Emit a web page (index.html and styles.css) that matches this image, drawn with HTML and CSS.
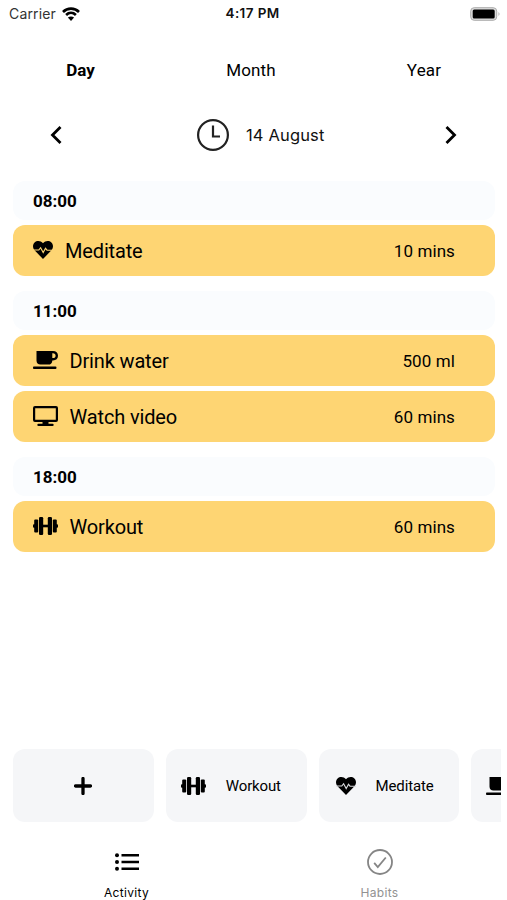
FILE: index.html
```html
<!DOCTYPE html>
<html lang="en">
<head>
<meta charset="utf-8">
<title>Activity</title>
<link rel="stylesheet" href="styles.css">
</head>
<body>
<svg class="defs" width="0" height="0" aria-hidden="true">
  <symbol id="heart" viewBox="0 0 20 18">
    <path d="M10 18 1.8 9.6C-.6 7 -.5 3.4 1.6 1.5 4-.7 7.700-.4 10 2.200 12.300-.4 16-.7 18.400 1.500 20.500 3.400 20.600 7 18.200 9.600Z"/>
    <path class="pulse" d="M0 9H5.800L7.600 6.700 10.200 11.500 12.500 7.300 14 9.200H20"/>
  </symbol>
  <symbol id="cup" viewBox="0 0 25 18">
    <path fill-rule="evenodd" d="M3.500 0H20C23 0 25 1.800 25 4.700S23 9.400 20 9.400H19.300C19.300 12 17.800 13.600 15.300 13.600H7.500C5 13.600 3.500 12 3.500 9.500ZM19.300 2.300V7.100H20C21.600 7.100 22.600 6.200 22.600 4.700S21.600 2.300 20 2.300ZM.8 15.500H22.500Q23.500 15.500 23.500 16.700T22.500 17.900H.8Q0 17.900 0 16.700T.8 15.500Z"/>
  </symbol>
  <symbol id="screen" viewBox="0 0 25 20">
    <path fill-rule="evenodd" d="M2 0H23Q25 0 25 2V14Q25 16 23 16H2Q0 16 0 14V2Q0 0 2 0ZM2.200 2.200V13.800H22.800V2.200ZM9.500 16h6v1.800h4q1.200 0 1.200 1.100t-1.200 1.100h-14q-1.200 0-1.200-1.100t1.200-1.100H9.500Z"/>
  </symbol>
  <symbol id="dumbbell" viewBox="0 0 25 18">
    <rect x="6" y="0" width="4.200" height="18" rx="1.200"/><rect x="14.800" y="0" width="4.200" height="18" rx="1.200"/>
    <rect x="1.200" y="2.600" width="4" height="12.800" rx="1"/><rect x="19.800" y="2.600" width="4" height="12.800" rx="1"/>
    <rect x="0" y="7.300" width="3" height="3.400" rx="1"/><rect x="22" y="7.300" width="3" height="3.400" rx="1"/>
    <rect x="9" y="7.700" width="7" height="2.600"/>
  </symbol>
</svg>
<header class="status">
  <span class="carrier">Carrier</span>
  <svg class="wifi" viewBox="0 0 18 14"><g fill="none" stroke="#000" stroke-width="2.600"><path d="M1 5C5.400.5 12.600.5 17 5"/><path d="M4.100 8C7 5.200 11 5.200 13.900 8"/></g><path d="M9 14 5.900 10.600Q9 8.200 12.100 10.600Z"/></svg>
  <span class="time">4:17 PM</span>
  <svg class="battery" viewBox="0 0 30 14"><rect x=".7" y=".7" width="26" height="12.600" rx="3.500" fill="#ddd" stroke="#aaa" stroke-width="1"/><rect x="2.700" y="2.500" width="22" height="9" rx="1.500"/><path d="M28.500 5Q30.500 7 28.500 9Z" fill="#aaa"/></svg>
</header>
<nav class="tabs"><span class="tab selected">Day</span><span class="tab month">Month</span><span class="tab year">Year</span></nav>
<section class="date">
  <svg class="prev" viewBox="0 0 12 18"><path d="M10.500 1 2.500 9l8 8"/></svg>
  <svg class="clock" viewBox="0 0 32 32"><circle cx="16" cy="16" r="14.900"/><path d="M16 6.500V17.500H23"/></svg>
  <span class="today">14 August</span>
  <svg class="next" viewBox="0 0 12 18"><path d="M1.500 1l8 8-8 8"/></svg>
</section>
<main class="schedule">
  <section class="slot"><h2>08:00</h2>
    <div class="row"><svg class="heart"><use href="#heart"/></svg><span class="name">Meditate</span><span class="amount">10 mins</span></div>
  </section>
  <section class="slot"><h2>11:00</h2>
    <div class="row"><svg class="cup"><use href="#cup"/></svg><span class="name">Drink water</span><span class="amount">500 ml</span></div>
    <div class="row"><svg class="screen"><use href="#screen"/></svg><span class="name">Watch video</span><span class="amount">60 mins</span></div>
  </section>
  <section class="slot"><h2>18:00</h2>
    <div class="row"><svg class="dumbbell"><use href="#dumbbell"/></svg><span class="name">Workout</span><span class="amount">60 mins</span></div>
  </section>
</main>
<section class="shortcuts">
  <div class="card add"><svg class="plus" viewBox="0 0 18 18"><path d="M9 1.500v15M1.500 9h15"/></svg></div>
  <div class="card"><svg class="dumbbell"><use href="#dumbbell"/></svg><span>Workout</span></div>
  <div class="card meditate"><svg class="heart"><use href="#heart"/></svg><span>Meditate</span></div>
  <div class="card"><svg class="cup"><use href="#cup"/></svg></div>
</section>
<footer class="bottom">
  <div class="item"><svg class="list" viewBox="0 0 26 26"><circle cx="3" cy="6.200" r="2"/><circle cx="3" cy="13" r="2"/><circle cx="3" cy="19.800" r="2"/><path d="M7.500 6.200H25M7.500 13H25M7.500 19.800H25"/></svg><span>Activity</span></div>
  <div class="item muted"><svg class="check" viewBox="0 0 26 26"><circle cx="13" cy="13" r="12"/><path d="m7.200 13.800 3.600 4.200 8-9.500"/></svg><span>Habits</span></div>
</footer>
</body>
</html>
```

FILE: styles.css
```css
* { box-sizing: border-box; }
body { margin: 0; width: 507px; height: 900px; overflow: hidden; background: #fff; color: #000; font-family: Roboto, sans-serif; display: flex; flex-direction: column; }
svg { display: block; flex: none; }
.defs { position: absolute; }
.status { height: 27px; display: grid; grid-template-columns: 53px 172px 1fr 37px; align-items: center; padding-left: 9px; font: 14px/27px Inter, sans-serif; }
.carrier { color: #333; letter-spacing: .15px; }
.wifi { width: 18px; height: 14px; }
.status .time { margin-left: -8.500px; font-weight: 600; color: #111; font-size: 13.500px; letter-spacing: .4px; }
.battery { width: 30px; height: 14px; }
.tabs { height: 86px; display: grid; grid-template-columns: 161px 180px 166px; text-align: center; font-size: 17px; line-height: 87px; letter-spacing: .15px; }
.selected { font-weight: 700; letter-spacing: -.1px; }
.date { height: 45px; display: flex; align-items: center; padding: 0 50px; font: 16.500px Inter, sans-serif; color: #111; }
.date svg { fill: none; stroke: #000; }
.date .clock { stroke: #222; }
.prev, .next { width: 12px; height: 18px; stroke-width: 2.800; }
.clock { width: 32px; height: 32px; margin-left: 135px; stroke-width: 2.200; }
.today { margin-left: 17px; letter-spacing: .15px; }
.next { margin-left: auto; }
.schedule { margin-top: 23px; padding: 0 12px 0 13px; height: 568px; display: flex; flex-direction: column; gap: 15px; }
.slot { display: flex; flex-direction: column; gap: 5px; }
h2 { margin: 0; height: 39px; border-radius: 12px; background: #fafcfe; padding-left: 20px; font-size: 17px; line-height: 41px; font-weight: 700; }
.row { height: 51px; border-radius: 12px; background: #fed573; display: flex; align-items: center; padding: 0 40px 0 20px; }
.name { margin-left: 12px; font-size: 20px; line-height: 28px; letter-spacing: -.15px; padding-top: 1px; }
.cup + .name, .screen + .name, .dumbbell + .name { margin-left: 11.500px; }
.amount { margin-left: auto; font-size: 17px; letter-spacing: .1px; padding-top: 1px; }
.heart { width: 20px; height: 18px; }
.pulse { fill: none; stroke: #fed573; stroke-width: 1.100; }
.card .heart { --line: #d9dadd; }
.pulse { stroke: var(--line, #fed573); }
.cup, .dumbbell { width: 25px; height: 18px; }
.row .cup { margin-top: -1px; }
.screen { width: 25px; height: 20px; margin-top: -1px; }
.shortcuts { width: 501px; height: 74px; overflow: hidden; display: flex; gap: 12px; padding-left: 13px; }
.card { flex: none; width: 140.800px; height: 73px; margin-top: 1px; border-radius: 12px; background: #f5f6f8; display: flex; align-items: center; padding-left: 15px; font-size: 15px; letter-spacing: -.15px; }
.card span { margin-left: 20px; }
.add { justify-content: center; padding: 0; }
.plus { width: 18px; height: 18px; fill: none; stroke: #000; stroke-width: 3.300; stroke-linecap: round; }
.meditate { padding-left: 17px; }
.bottom { height: 78px; display: flex; padding-top: 27px; }
.item { width: 253px; display: flex; flex-direction: column; align-items: center; font: 12px/16px Inter, sans-serif; letter-spacing: .3px; }
.item span { margin-top: 9.500px; }
.item svg { width: 26px; height: 26px; }
.list { stroke: #000; stroke-width: 2.600; }
.list circle { stroke: none; }
.check { fill: none; stroke: #858585; stroke-width: 1.800; }
.muted { color: #929292; }
```
